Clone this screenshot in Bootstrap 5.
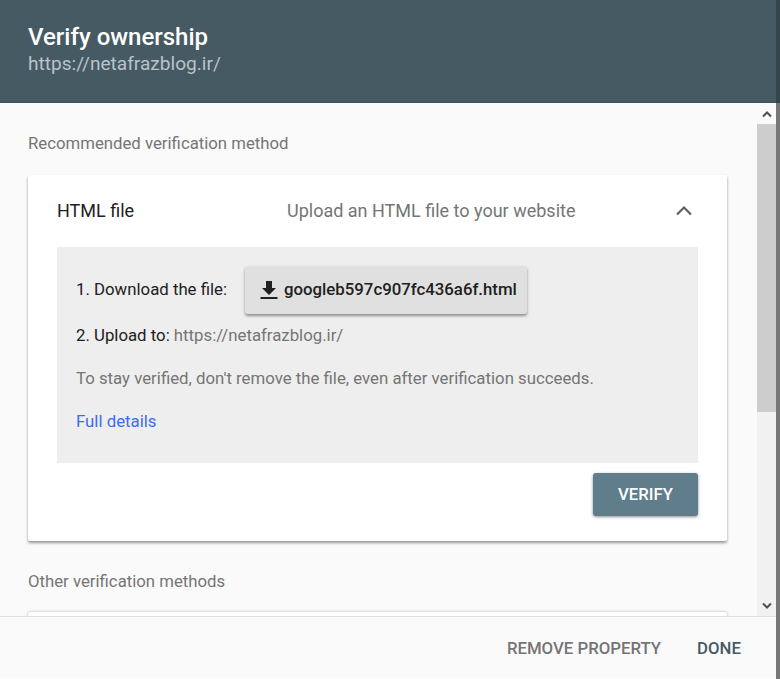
<!DOCTYPE html>
<html lang="en">
<head>
<meta charset="utf-8">
<title>Verify ownership</title>
<link rel="stylesheet" href="https://cdn.jsdelivr.net/npm/bootstrap@5.3.0/dist/css/bootstrap.min.css">
<style>
html,body{height:679px;overflow:hidden;}
body{font-family:Roboto,"Liberation Sans",sans-serif;background:#fff;color:#212121;}
.dlg{width:776px;height:678px;background:#fafafa;}
.dlg-head{height:103px;background:#465a64;padding:22px 28px 0;border-bottom:1px solid #3f535d;}
.dlg-title{font-size:24px;font-weight:500;line-height:30px;color:#fff;}
.dlg-url{font-size:19.100px;line-height:24px;color:#b9c3c8;}
.dlg-mid{height:513px;overflow:hidden;}
.dlg-scroll{width:757px;padding:0 30px 0 28px;}
.sec-label{font-size:16.750px;line-height:24px;color:#757575;}
.sec-first{padding-top:28px;height:72px;}
.sec-other{padding-top:28px;height:71px;}
.vcard{background:#fff;border-radius:2px;box-shadow:0 2px 3px rgba(0,0,0,.4);height:366px;padding:0 29px;}
.vcard-next{background:#fff;height:40px;border-radius:2px;box-shadow:0 0 3px rgba(0,0,0,.3);}
.vhead{height:72px;font-size:18px;padding-bottom:1px;}
.vhead-name{width:230px;color:#212121;}
.vhead-desc{color:#757575;flex:1;}
.chev{margin-right:5px;}
.vpanel{background:#eee;height:216px;padding:19px 19px 0;font-size:16.800px;color:#212121;}
.dl-row{height:48px;}
.dl-label{width:169px;}
.dl-btn{width:282px;height:48px;background:#e0e0e0;border:0;border-radius:3px;box-shadow:0 2px 3px rgba(0,0,0,.4);font-weight:500;font-size:16.800px;color:#212121;padding:0 6px 0 14px;gap:5px;white-space:nowrap;}
.up-row{padding-top:9px;line-height:24px;height:33px;}
.muted-url,.note{color:#757575;}
.note{padding-top:19px;line-height:24px;height:43px;}
.more{display:block;padding-top:19px;line-height:24px;color:#3b6cf6;text-decoration:none;}
.verify-row{padding-top:10px;}
.verify-btn{width:105px;height:43px;background:#607d8b;color:#fff;border:0;border-radius:3px;font-size:16.700px;font-weight:500;box-shadow:0 1px 3px rgba(0,0,0,.45);padding:0;}
.sbar{width:19px;background:#f1f1f1;}
.sarrow{height:21px;background:#f1f1f1;}
.sarrow-up{background:#fafafa;}
.sthumb{height:288px;background:#cdcdcd;}
.sfill{flex:1;}
.dlg-foot{height:62px;border-top:1px solid #dedede;padding-right:35px;padding-top:2px;gap:36px;font-size:16.800px;font-weight:500;}
.foot-a{color:#757575;}
.foot-b{color:#455a64;}
.edge{width:4px;height:679px;}
.edge-a{height:103px;background:#36444c;}
.edge-b{height:576px;background:#777;}
</style>
</head>
<body class="d-flex">
<div class="dlg d-flex flex-column">
  <div class="dlg-head">
    <div class="dlg-title">Verify ownership</div>
    <div class="dlg-url">https://netafrazblog.ir/</div>
  </div>
  <div class="dlg-mid d-flex">
    <div class="dlg-scroll">
      <div class="sec-label sec-first">Recommended verification method</div>
      <div class="vcard">
        <div class="vhead d-flex align-items-center">
          <div class="vhead-name">HTML file</div>
          <div class="vhead-desc">Upload an HTML file to your website</div>
          <svg class="chev" width="18" height="12" viewBox="0 0 18 12"><path d="M2 9.500 9 2.500l7 7" fill="none" stroke="#616161" stroke-width="2.200"/></svg>
        </div>
        <div class="vpanel">
          <div class="dl-row d-flex align-items-center">
            <div class="dl-label">1. Download the file:</div>
            <button class="dl-btn d-flex align-items-center" type="button">
              <svg width="20" height="20" viewBox="0 0 20 20"><path d="M7 1h6v7h4l-7 7-7-7h4z" fill="#212121"/><rect x="1.500" y="17" width="17" height="2" fill="#212121"/></svg>
              <span>googleb597c907fc436a6f.html</span>
            </button>
          </div>
          <div class="up-row">2. Upload to: <span class="muted-url">https://netafrazblog.ir/</span></div>
          <div class="note">To stay verified, don't remove the file, even after verification succeeds.</div>
          <a class="more" href="#">Full details</a>
        </div>
        <div class="verify-row d-flex justify-content-end">
          <button class="verify-btn" type="button">VERIFY</button>
        </div>
      </div>
      <div class="sec-label sec-other">Other verification methods</div>
      <div class="vcard-next"></div>
    </div>
    <div class="sbar d-flex flex-column">
      <div class="sarrow sarrow-up d-flex align-items-center justify-content-center">
        <svg width="10" height="8" viewBox="0 0 10 8"><path d="M1 6.500 5 2.500l4 4" fill="none" stroke="#505050" stroke-width="2"/></svg>
      </div>
      <div class="sthumb"></div>
      <div class="sfill"></div>
      <div class="sarrow d-flex align-items-center justify-content-center">
        <svg width="10" height="8" viewBox="0 0 10 8"><path d="M1 1.500 5 5.500l4-4" fill="none" stroke="#505050" stroke-width="2"/></svg>
      </div>
    </div>
  </div>
  <div class="dlg-foot d-flex align-items-center justify-content-end">
    <span class="foot-a">REMOVE PROPERTY</span>
    <span class="foot-b">DONE</span>
  </div>
</div>
<div class="edge">
  <div class="edge-a"></div>
  <div class="edge-b"></div>
</div>
</body>
</html>
